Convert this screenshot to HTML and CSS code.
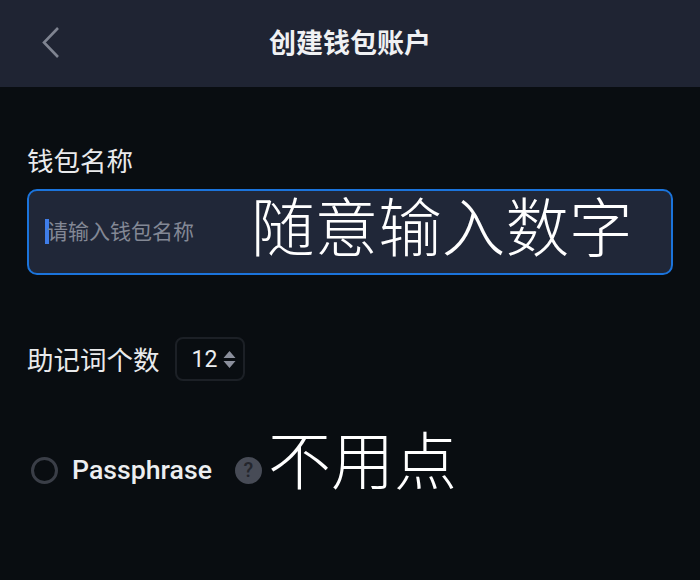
FILE: index.html
```html
<!DOCTYPE html>
<html lang="zh-CN">
<head>
<meta charset="utf-8">
<title>创建钱包账户</title>
<link rel="stylesheet" href="styles.css">
</head>
<body>
<div class="page">
  <header class="topbar">
    <svg class="back" width="20" height="32" viewBox="0 0 20 32" aria-hidden="true"><path d="M18 2 L4 16.5 L18 31" fill="none" stroke="#7f8491" stroke-width="2.6"/></svg>
    <h1 class="title">创建钱包账户</h1>
  </header>
  <main class="content">
    <label class="field-label">钱包名称</label>
    <div class="input">
      <span class="caret"></span>
      <span class="placeholder">请输入钱包名称</span>
      <span class="note note-input">随意输入数字</span>
    </div>
    <div class="count-row">
      <span class="count-label">助记词个数</span>
      <div class="select">
        <span class="select-value">12</span>
        <svg width="13" height="19" viewBox="0 0 13 19" aria-hidden="true"><path d="M6.5 1 L12.5 8 H0.5 Z M0.5 11 H12.5 L6.5 18 Z" fill="#8b8f9c"/></svg>
      </div>
    </div>
    <div class="pass-row">
      <span class="radio"></span>
      <span class="pass-label">Passphrase</span>
      <span class="help">?</span>
      <span class="note note-pass">不用点</span>
    </div>
  </main>
</div>
</body>
</html>
```
FILE: styles.css
```css
* { box-sizing: border-box; }
html, body { margin: 0; padding: 0; }
body {
  background: #090d11;
  font-family: "Noto Sans CJK SC", "Noto Sans", sans-serif;
  color: #f2f3f5;
}
.page { width: 700px; height: 580px; overflow: hidden; }
.topbar {
  position: relative;
  height: 87px;
  background: #1f2433;
  display: flex;
  align-items: center;
  justify-content: center;
}
.back { position: absolute; left: 40px; top: 26px; }
.title {
  margin: 0;
  font-size: 27px;
  font-weight: 700;
  line-height: 36px;
  color: #f0f1f3;
  position: relative;
  top: -2px;
}
.content { padding: 56px 27px 0; display: flex; flex-direction: column; }
.field-label { font-size: 26.5px; line-height: 36px; color: #e9eaec; position: relative; top: -1px; }
.input {
  position: relative;
  margin-top: 10px;
  height: 86px;
  background: #202738;
  border: 2px solid #1b74dc;
  border-radius: 10px;
  display: flex;
  align-items: center;
  padding-left: 16px;
}
.caret { width: 4px; height: 25px; background: #3f7de8; flex: none; margin-top: -2px; }
.placeholder { font-size: 21px; line-height: 30px; color: #838895; margin-left: -2px; margin-top: -4px; }
.note { position: absolute; color: #fff; font-weight: 300; white-space: nowrap; }
.note-input { left: 222px; top: -8px; font-size: 63.6px; line-height: 80px; }
.count-row { display: flex; align-items: center; margin-top: 62px; height: 44px; }
.count-label { font-size: 26.5px; line-height: 36px; color: #e9eaec; }
.select {
  margin-left: 15px;
  width: 70px;
  height: 44px;
  border: 2px solid #1c2026;
  border-radius: 8px;
  display: flex;
  align-items: center;
  padding-left: 15px;
  gap: 6px;
}
.select-value { font-family: Roboto, sans-serif; font-size: 23px; color: #eceef0; }
.pass-row { position: relative; display: flex; align-items: center; margin-top: 67px; height: 44px; padding-left: 4px; }
.radio { width: 27px; height: 27px; border: 3px solid #3a3e47; border-radius: 50%; flex: none; }
.pass-label { font-family: Roboto, sans-serif; font-weight: 500; font-size: 26.7px; color: #eceef0; margin-left: 14px; }
.help {
  width: 27px; height: 27px; border-radius: 50%;
  background: #474b56; color: #24262d;
  font-family: Roboto, sans-serif; font-weight: 500; font-size: 20px;
  display: flex; align-items: center; justify-content: center;
  margin-left: 23px; flex: none;
}
.note-pass { left: 241px; top: -31px; font-size: 63px; line-height: 80px; }
```
